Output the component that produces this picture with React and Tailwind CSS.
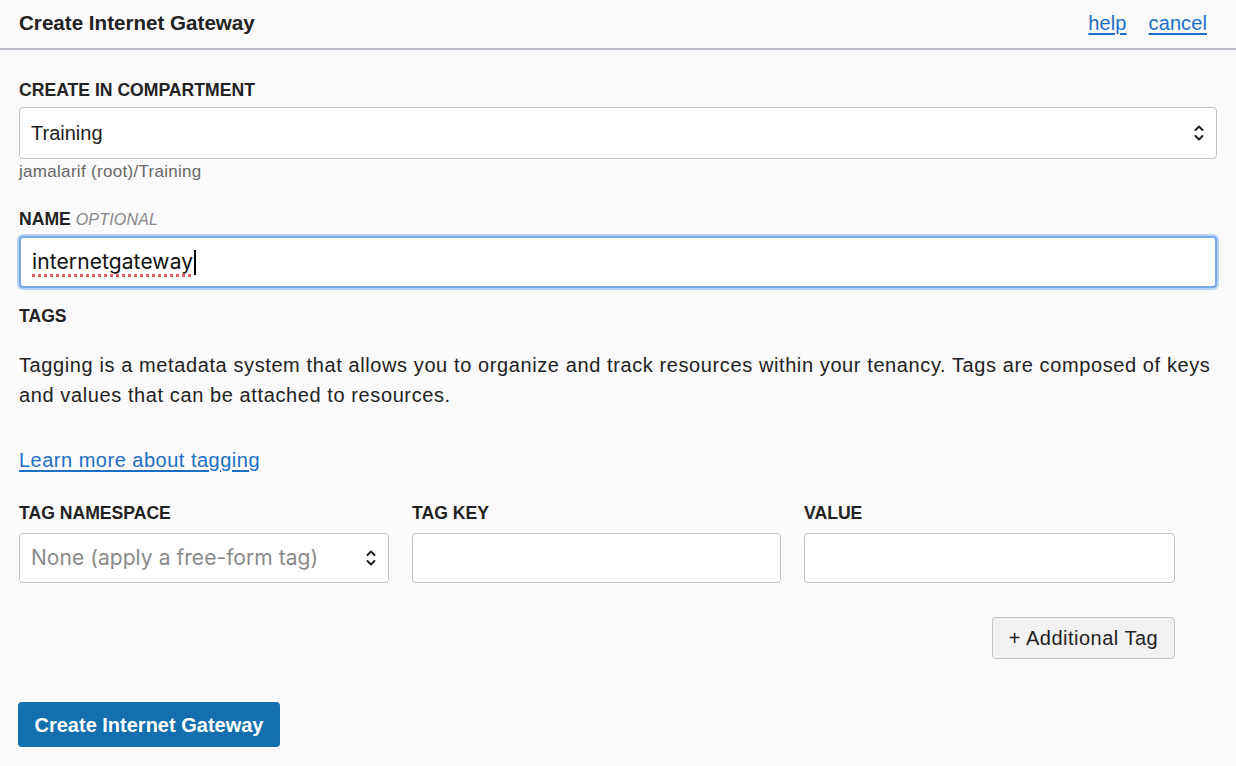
import React from "react";

const Chevrons = () => (
  <svg width="12" height="20" viewBox="0 0 12 20" fill="none" stroke="#222" strokeWidth="2" strokeLinecap="round" strokeLinejoin="round">
    <path d="M2.5 7 L6 3.5 L9.5 7" />
    <path d="M2.5 13 L6 16.5 L9.5 13" />
  </svg>
);

const Label = ({ children, className = "" }) => (
  <div className={"h-[20px] leading-[20px] text-[17.6px] font-bold text-[#222] " + className}>{children}</div>
);

const sys = { fontFamily: 'Inter, "Liberation Sans", sans-serif' };

export default function App() {
  return (
    <div className="min-h-[766px] w-[1236px] bg-[#fafafa] text-[#222]" style={{ fontFamily: '"Liberation Sans", Arial, sans-serif' }}>
      <div className="h-[50px] border-b-2 border-[#b8bcc5] flex items-center justify-between pl-[19px] pr-[29px] pb-[2px]">
        <div className="text-[20.6px] font-semibold text-[#222]">Create Internet Gateway</div>
        <div className="flex gap-[22px] text-[20px] tracking-[0.1px] text-[#1c6fc4]">
          <a className="underline underline-offset-[3px]" href="#">help</a>
          <a className="underline underline-offset-[3px]" href="#">cancel</a>
        </div>
      </div>

      <div className="px-[19px] pt-[30px]">
        <Label>CREATE IN COMPARTMENT</Label>
        <div className="mt-[7px] h-[52px] bg-white border-[1.5px] border-[#bfc3ca] rounded-[4px] flex items-center justify-between pl-[11px] pr-[11px]">
          <span className="text-[20px]">Training</span>
          <Chevrons />
        </div>
        <div className="mt-[3px] h-[20px] leading-[20px] text-[17px] tracking-[0.3px] text-[#666]">jamalarif (root)/Training</div>

        <div className="mt-[27px] h-[20px] leading-[20px] text-[17.6px]">
          <span className="font-bold">NAME</span>{" "}
          <span className="italic text-[#888] text-[16px] tracking-[0.2px]">OPTIONAL</span>
        </div>
        <div className="mt-[7px] h-[52px] bg-white border-2 border-[#76a9e6] rounded-[4px] shadow-[0_0_0_2px_#b6d2f4] flex items-center pl-[11px]">
          <span style={sys} className="text-[21px] tracking-[0.1px] text-[#111] underline decoration-dotted decoration-[#e8605f] decoration-[2.5px] underline-offset-[5px]">internetgateway</span>
          <span className="inline-block w-[1.5px] h-[25px] bg-black ml-[1px]"></span>
        </div>

        <Label className="mt-[18px]">TAGS</Label>
        <p className="mt-[24px] text-[20px] tracking-[0.6px] leading-[30px] text-[#222]">
          Tagging is a metadata system that allows you to organize and track resources within your tenancy. Tags are composed of keys and values that can be attached to resources.
        </p>
        <div className="mt-[35px] h-[30px] leading-[30px]">
          <a href="#" className="text-[20px] tracking-[0.5px] text-[#1c6fc4] underline underline-offset-[3px]">Learn more about tagging</a>
        </div>

        <div className="mt-[28px] flex gap-[23px]">
          <div className="w-[370px]">
            <Label>TAG NAMESPACE</Label>
            <div className="mt-[10px] h-[50px] bg-white border-[1.5px] border-[#bfc3ca] rounded-[4px] flex items-center justify-between pl-[11px] pr-[11px]">
              <span style={sys} className="text-[21px] tracking-[0.05px] text-[#8a8a8a]">None (apply a free-form tag)</span>
              <Chevrons />
            </div>
          </div>
          <div className="w-[369px]">
            <Label>TAG KEY</Label>
            <div className="mt-[10px] h-[50px] bg-white border-[1.5px] border-[#bfc3ca] rounded-[4px]"></div>
          </div>
          <div className="w-[371px]">
            <Label>VALUE</Label>
            <div className="mt-[10px] h-[50px] bg-white border-[1.5px] border-[#bfc3ca] rounded-[4px]"></div>
          </div>
        </div>

        <div className="w-[1156px] flex justify-end mt-[34px]">
          <button className="h-[42px] w-[183px] bg-[#f2f2f2] border-[1.5px] border-[#bfc3ca] rounded-[4px] text-[20px] tracking-[0.5px] text-[#222]">+ Additional Tag</button>
        </div>

        <button className="mt-[43px] -ml-[1px] h-[45px] w-[262px] bg-[#136fae] rounded-[4px] text-white text-[20px] font-semibold">Create Internet Gateway</button>
      </div>
    </div>
  );
}
